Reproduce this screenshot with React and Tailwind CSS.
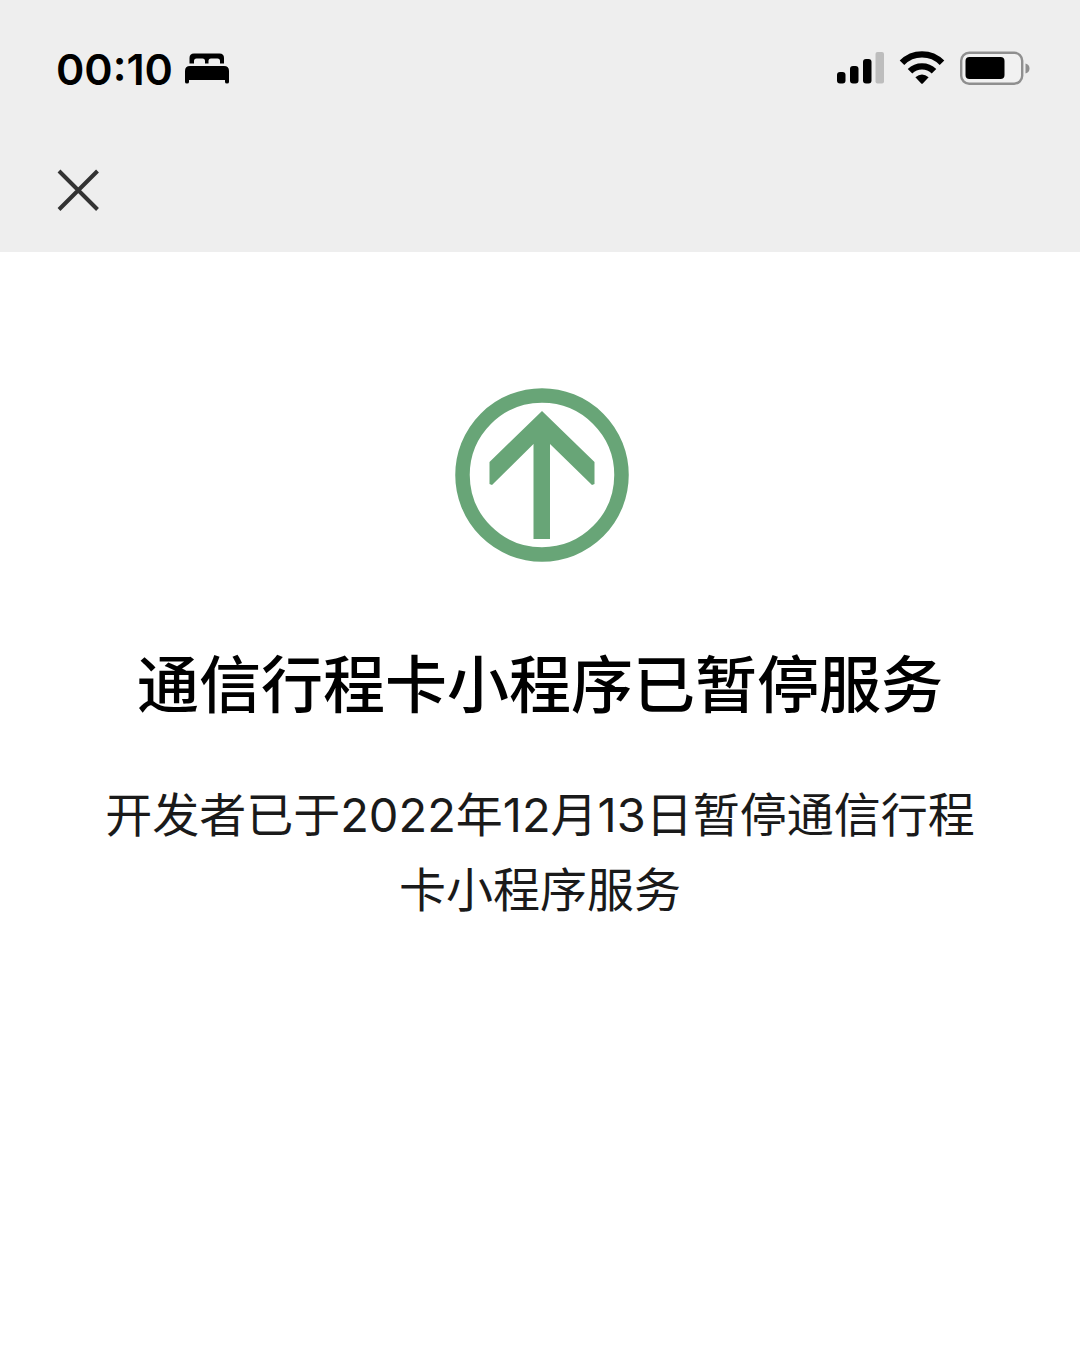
function BedIcon() {
  return (
    <svg width="44" height="32" viewBox="0 0 44 32" aria-hidden="true">
      <path d="M9 .5H34.500Q39 .5 39 5V10.500H35V8Q35 5.500 32.500 5.500H26Q23.500 5.500 23.500 8V10.500H20V8Q20 5.500 17.500 5.500H11.500Q9 5.500 9 8V10.500H4.500V5Q4.500 .5 9 .5Z" />
      <path d="M5 13H39Q44 13 44 18V29Q44 30.500 42 30.500Q40 30.500 40 29V27H4V29Q4 30.500 2 30.500Q0 30.500 0 29V18Q0 13 5 13Z" />
    </svg>
  );
}

function SignalIcon() {
  return (
    <svg width="48" height="36" viewBox="0 0 48 36" aria-hidden="true">
      <rect x="1" y="21" width="8.500" height="11.500" rx="3" />
      <rect x="14" y="15" width="8.500" height="17.500" rx="3" />
      <rect x="27" y="8" width="8.500" height="24.500" rx="3" />
      <rect x="39.500" y="1" width="8.500" height="31.500" rx="2" fill="#bdbdbd" />
    </svg>
  );
}

function WifiIcon() {
  return (
    <svg width="46" height="36" viewBox="0 0 46 36" aria-hidden="true">
      <g fill="none" stroke="#000" strokeWidth="6.400">
        <path d="M3 11.800A28 28 0 0 1 43 11.800" />
        <path d="M11 20.300A17 17 0 0 1 35 20.300" />
      </g>
      <path d="M16.400 26.300Q23 20.500 29.600 26.300L23.800 32.400Q23 33.200 22.200 32.400Z" />
    </svg>
  );
}

function BatteryIcon() {
  return (
    <svg width="70" height="36" viewBox="0 0 70 36" aria-hidden="true">
      <rect x="1.200" y="1.700" width="61" height="31" rx="8" fill="#f1f1f1" stroke="#8f8f8f" strokeWidth="2.400" />
      <rect x="5.500" y="6" width="39" height="22" rx="4" />
      <path d="M65.500 12.500Q69.500 13.500 69.500 17.500Q69.500 21.500 65.500 22.500Z" fill="#8f8f8f" />
    </svg>
  );
}

function StatusBar() {
  return (
    <div className="flex items-center justify-between">
      <div className="flex items-center gap-3">
        <span className="text-[43px] leading-[48px] font-semibold">00:10</span>
        <BedIcon />
      </div>
      <div className="flex items-center gap-[15px]">
        <SignalIcon />
        <WifiIcon />
        <BatteryIcon />
      </div>
    </div>
  );
}

function TravelCardLogo() {
  return (
    <svg width="178" height="174" viewBox="-4 0 178 174" aria-hidden="true">
      <circle cx="87" cy="87" r="79.500" fill="none" stroke="#68a577" strokeWidth="14.500" />
      <path d="M87 23L139.500 74V96L137 97L95 56V151H78.500V56L37 97L34.500 96V74Z" fill="#68a577" />
    </svg>
  );
}

export default function App() {
  return (
    <div className="min-h-screen bg-white font-['Inter','Noto_Sans_CJK_SC',sans-serif] text-black">
      <header className="bg-[#eeeeee] pt-[45px] pr-[50px] pb-10 pl-14">
        <StatusBar />
        <button type="button" aria-label="关闭" className="mt-[75px] block">
          <svg width="44" height="44" viewBox="0 0 44 44" fill="none" stroke="#333" strokeWidth="4" aria-hidden="true">
            <path d="M3 3L41.500 41.500M41.500 3L3 41.500" />
          </svg>
        </button>
      </header>

      <main className="flex flex-col items-center px-24 pt-[136px] text-center">
        <TravelCardLogo />
        <h1 className="mt-[84px] text-[62px] leading-[80px] font-medium">
          通信行程卡小程序已暂停服务
        </h1>
        <p className="mt-[51px] text-[47px] leading-[75px] text-[#1a1a1a]">
          开发者已于2022年12月13日暂停通信行程卡小程序服务
        </p>
      </main>
    </div>
  );
}
